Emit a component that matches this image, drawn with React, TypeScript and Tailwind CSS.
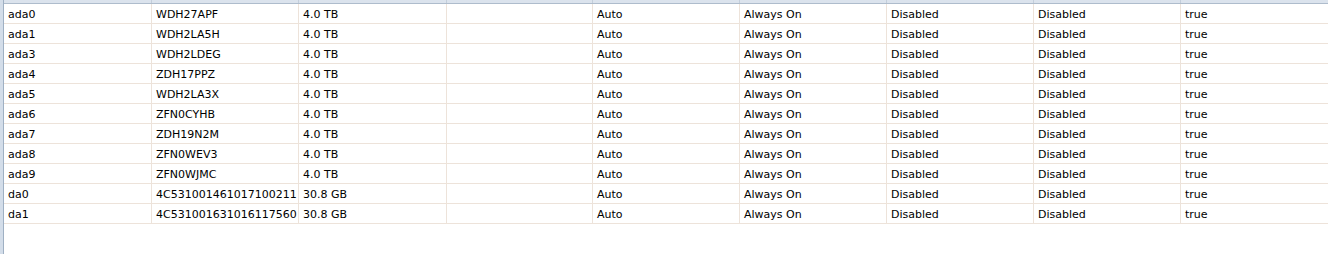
const widths = [148, 147, 148, 146, 147, 147, 147, 147];

const rows = [
    ["ada0", "WDH27APF", "4.0 TB"],
    ["ada1", "WDH2LA5H", "4.0 TB"],
    ["ada3", "WDH2LDEG", "4.0 TB"],
    ["ada4", "ZDH17PPZ", "4.0 TB"],
    ["ada5", "WDH2LA3X", "4.0 TB"],
    ["ada6", "ZFN0CYHB", "4.0 TB"],
    ["ada7", "ZDH19N2M", "4.0 TB"],
    ["ada8", "ZFN0WEV3", "4.0 TB"],
    ["ada9", "ZFN0WJMC", "4.0 TB"],
    ["da0", "4C531001461017100211", "30.8 GB"],
    ["da1", "4C531001631016117560", "30.8 GB"],
];

export default function App() {
    return (
        <div className="flex w-[1328px] h-[254px] bg-white text-[11px] text-black" style={{ fontFamily: '"DejaVu Sans", Verdana, sans-serif' }}>
            {/* left frame edge */}
            <div className="w-[4px] shrink-0 bg-[#d3dde9] border-r border-[#9fb0c3]"></div>

            <div className="flex-1 flex flex-col">
                {/* bottom of the column header */}
                <div className="flex h-[4px] bg-[#dbe3ed] border-b border-[#aebccc]">
                    {widths.map((w, i) => (
                        <div key={i} style={{ width: w }} className="shrink-0 border-r border-[#c3cedb]"></div>
                    ))}
                    <div className="flex-1"></div>
                </div>

                {rows.map((r, i) => (
                    <GridRow key={i} cells={[r[0], r[1], r[2], "", "Auto", "Always On", "Disabled", "Disabled", "true"]} />
                ))}
            </div>
        </div>
    );
}

const GridRow = ({ cells }: { cells: string[] }) => (
    <div className="flex h-[20px] border-b border-[#ede3da]">
        {cells.map((c, i) => (
            <div
                key={i}
                style={i < widths.length ? { width: widths[i] } : undefined}
                className={`flex items-center pl-[4px] pt-[4px] whitespace-nowrap overflow-hidden ${i < widths.length ? 'shrink-0 border-r border-[#ede3da]' : 'flex-1'}`}
            >
                {c}
            </div>
        ))}
    </div>
);
